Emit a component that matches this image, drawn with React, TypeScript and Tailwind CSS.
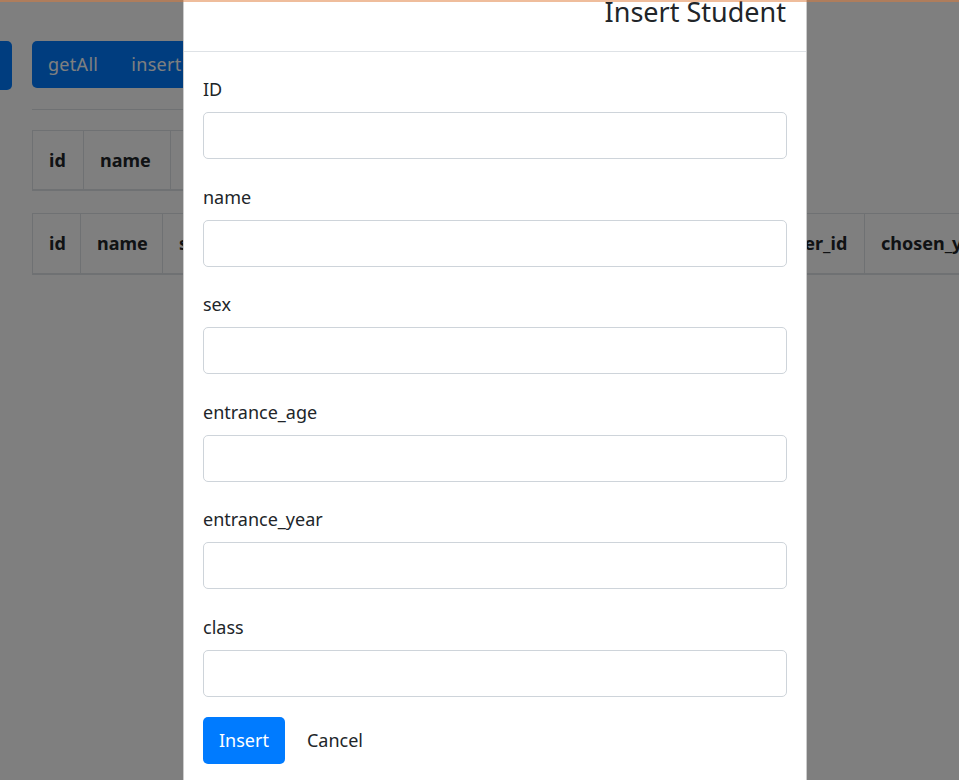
import React from "react";

const fields = ["ID", "name", "sex", "entrance_age", "entrance_year", "class"];

export default function App() {
  return (
    <div className="relative w-[959px] h-[780px] overflow-hidden bg-white text-[#212529] font-['Noto_Sans',sans-serif] text-[18px] leading-[27px]">
      {/* underlying page */}
      <div className="pl-[32px] pt-[41px]">
        <div className="flex gap-[20px] ml-[-100px]">
          <div className="w-[80px] h-[49px] rounded-[5px] bg-[#007bff]" />
          <div className="flex h-[47px] rounded-[5px] bg-[#007bff] text-white">
            <span className="pl-[16px] pr-[18px] leading-[47px] tracking-[0.3px]">getAll</span>
            <span className="px-[15px] leading-[47px] tracking-[0.3px]">insert</span>
            <span className="px-[16px] leading-[47px]">update</span>
            <span className="px-[16px] leading-[47px]">delete</span>
          </div>
        </div>
        <div className="mt-[19px] w-[740px] border-t border-[#dee2e6]" />
        <div className="mt-[20px] flex">
          {[
            ["id", 52],
            ["name", 88],
            ["sex", 70],
            ["entrance_age", 150],
            ["entrance_year", 160],
            ["class", 80],
          ].map(([t, w]) => (
            <div
              key={t as string}
              style={{ width: w as number }}
              className="h-[61px] shrink-0 flex items-center pl-[16px] font-bold border border-[#dee2e6] border-b-2 -ml-px first:ml-0 whitespace-nowrap"
            >
              {t}
            </div>
          ))}
        </div>
        <div className="mt-[22px] flex">
          {[
            ["id", 49],
            ["name", 83],
            ["student_id", 130],
            ["course_id", 120],
            ["course_name", 160],
            ["score", 169],
            ["teacher_id", 128],
            ["chosen_year", 150],
          ].map(([t, w]) => (
            <div
              key={t as string}
              style={{ width: w as number }}
              className="h-[62px] shrink-0 flex items-center pl-[16px] font-bold border border-[#dee2e6] border-b-2 -ml-px first:ml-0 whitespace-nowrap overflow-hidden"
            >
              {t}
            </div>
          ))}
        </div>
      </div>

      {/* backdrop */}
      <div className="absolute inset-0 bg-black/50" />

      {/* modal */}
      <div className="absolute left-[183px] top-[-26px] w-[624px] h-[900px] bg-white border border-black/20 rounded-[5px]">
        <div className="px-[20px] pt-[17px] pb-[19px] border-b border-[#dee2e6] text-right">
          <h5 className="text-[27px] leading-[40px] font-normal">Insert Student</h5>
        </div>
        <div className="px-[19px] pt-[24px]">
          {fields.map((f) => (
            <div key={f} className="mb-[24.6px]">
              <label className="block mb-[9px]">{f}</label>
              <div className="h-[47px] rounded-[5px] border border-[#ced4da] bg-white" />
            </div>
          ))}
          <div className="-mt-[4.6px] flex items-center">
            <button className="h-[47px] px-[16px] rounded-[5px] bg-[#007bff] text-white">Insert</button>
            <button className="h-[47px] px-[22px] text-[#212529]">Cancel</button>
          </div>
        </div>
      </div>

      {/* top line */}
      <div className="absolute top-0 left-0 right-0 h-[2px] bg-[#e07b39]/50" />
    </div>
  );
}
